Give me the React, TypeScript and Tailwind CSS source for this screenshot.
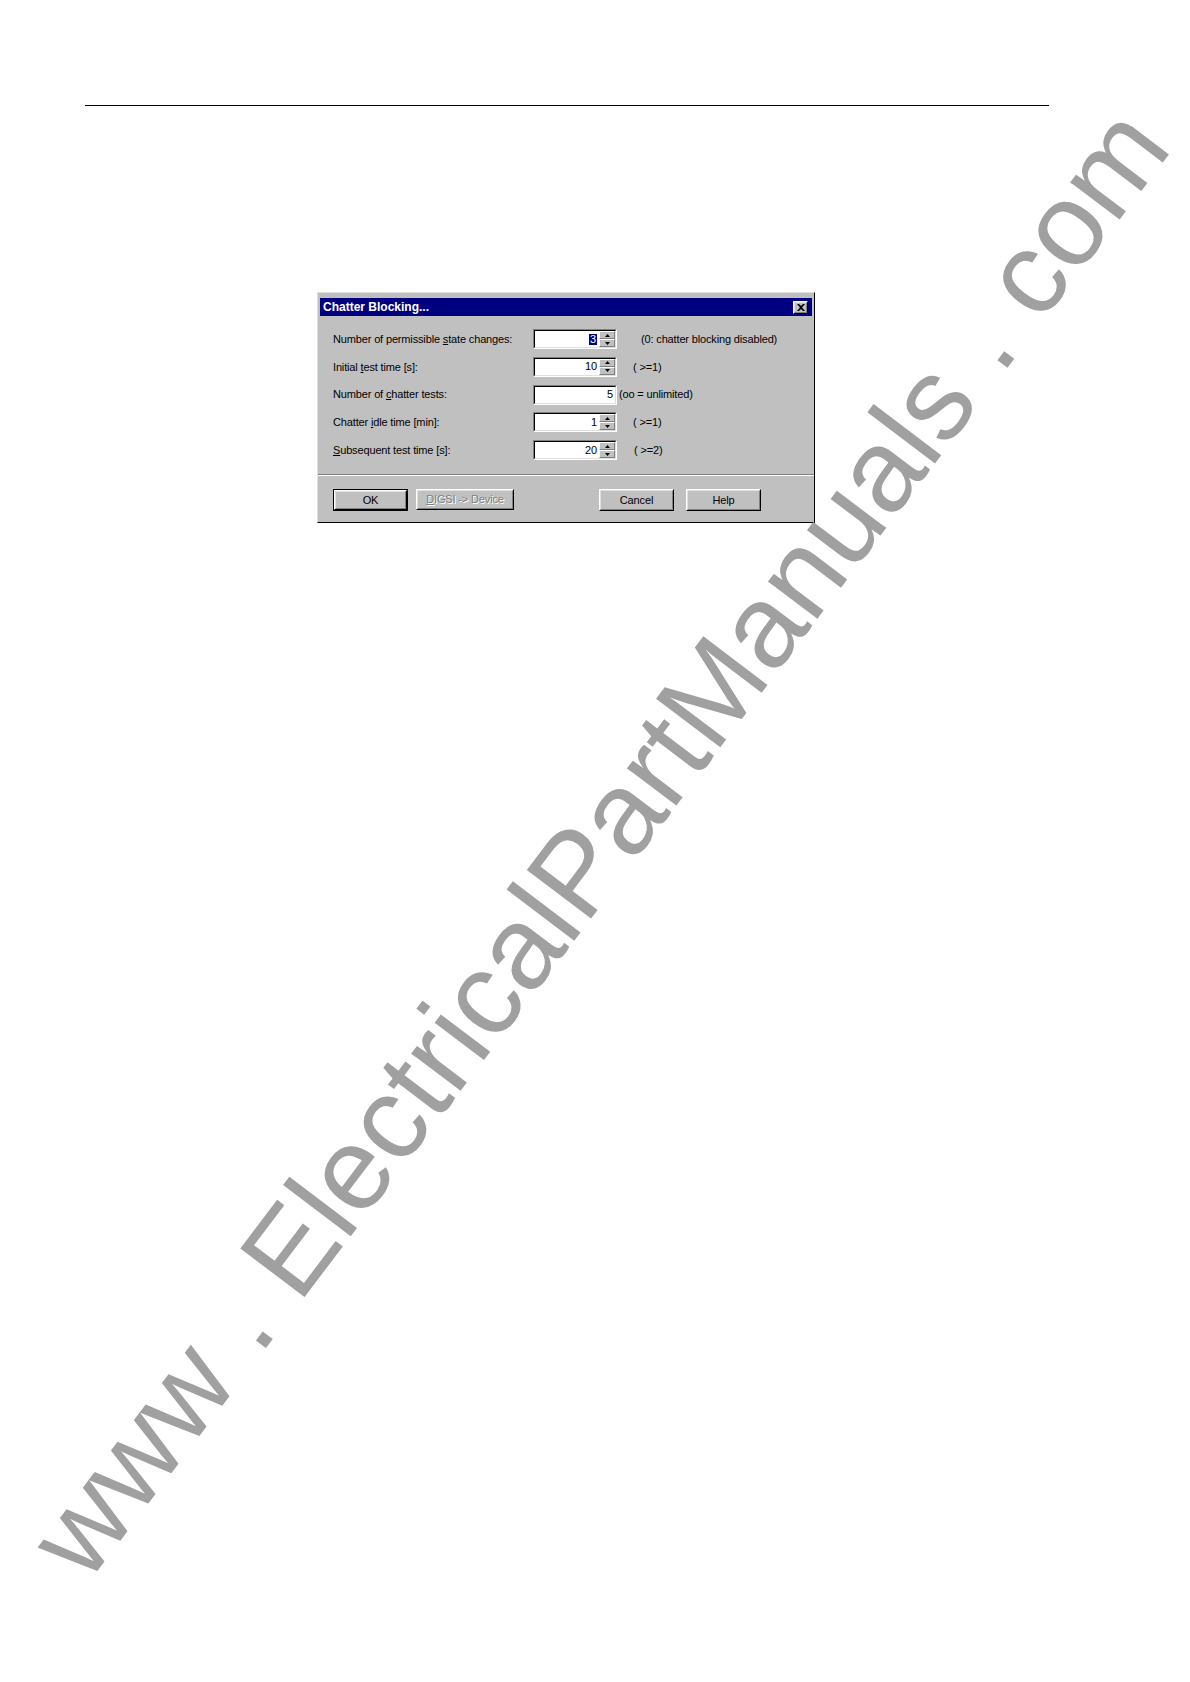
import React from 'react';

// Win95-style dialog on a white manual page with a diagonal watermark
const FONT = "font-['Liberation_Sans',Arial,sans-serif]";

const Raised = ({ className = '', children }: { className?: string; children?: React.ReactNode }) => (
  <div className={`border border-t-white border-l-white border-r-black border-b-black ${className}`}>
    <div className="flex h-full w-full items-center justify-center border border-t-[#dfdfdf] border-l-[#dfdfdf] border-r-[#808080] border-b-[#808080] bg-[#c0c0c0]">
      {children}
    </div>
  </div>
);

const Arrow = ({ up }: { up?: boolean }) => (
  <svg width="5" height="3" viewBox="0 0 5 3" className="block">
    <polygon points={up ? '2.5,0 5,3 0,3' : '0,0 5,0 2.5,3'} fill="#000" />
  </svg>
);

const SpinHalf = ({ up }: { up?: boolean }) => (
  <div className="flex h-[8px] w-full items-center justify-center border border-t-white border-l-white border-r-[#808080] border-b-[#808080] bg-[#c0c0c0]">
    <Arrow up={up} />
  </div>
);

interface FieldProps {
  value: React.ReactNode;
  spin?: boolean;
}

const Field = ({ value, spin = true }: FieldProps) => (
  <div className="h-[20px] w-[84px] border border-t-[#808080] border-l-[#808080] border-r-white border-b-white">
    <div className="flex h-full w-full border border-t-black border-l-black border-r-[#dfdfdf] border-b-[#dfdfdf]">
      <div className="flex flex-1 items-center justify-end bg-white pr-[2px] leading-none">{value}</div>
      {spin && (
        <div className="flex w-[16px] flex-col">
          <SpinHalf up />
          <SpinHalf />
        </div>
      )}
    </div>
  </div>
);

const ROWS: { label: React.ReactNode; value: React.ReactNode; spin?: boolean; hint: string; hintMl: string }[] = [
  {
    label: <>Number of permissible <u>s</u>tate changes:</>,
    value: <span className="bg-[#000080] px-px text-white">3</span>,
    hint: '(0: chatter blocking disabled)',
    hintMl: 'ml-[24px]',
  },
  { label: <>Initial <u>t</u>est time [s]:</>, value: '10', hint: '( >=1)', hintMl: 'ml-[16px]' },
  { label: <>Number of <u>c</u>hatter tests:</>, value: '5', spin: false, hint: '(oo = unlimited)', hintMl: 'ml-[2px]' },
  { label: <>Chatter <u>i</u>dle time [min]:</>, value: '1', hint: '( >=1)', hintMl: 'ml-[16px]' },
  { label: <><u>S</u>ubsequent test time [s]:</>, value: '20', hint: '( >=2)', hintMl: 'ml-[17px]' },
];

const ChatterDialog = () => (
  <div className={`ml-[317px] mt-[186px] w-[498px] border border-t-[#dfdfdf] border-l-[#dfdfdf] border-r-black border-b-black bg-[#c0c0c0] text-[11px] tracking-[-0.15px] text-black ${FONT}`}>
    {/* title bar */}
    <div className="mx-[2px] mt-[5px] flex h-[18px] items-center justify-between bg-[#000080] pl-[3px] pr-[4px]">
      <span className="text-[12px] font-bold tracking-normal text-white">Chatter Blocking...</span>
      <Raised className="h-[13px] w-[15px]">
        <svg width="8" height="7" viewBox="0 0 8 7">
          <path d="M0 0 L2 0 L4 2 L6 0 L8 0 L5 3.5 L8 7 L6 7 L4 5 L2 7 L0 7 L3 3.5 Z" fill="#000" />
        </svg>
      </Raised>
    </div>

    {/* settings */}
    <div className="flex flex-col gap-y-[7.75px] pl-[15px] pt-[13px]">
      {ROWS.map((r, i) => (
        <div key={i} className="flex h-[20px] items-center">
          <div className="w-[200px]">{r.label}</div>
          <Field value={r.value} spin={r.spin} />
          <div className={r.hintMl}>{r.hint}</div>
        </div>
      ))}
    </div>

    {/* etched separator */}
    <div className="mt-[14px] h-px bg-[#808080]" />
    <div className="h-px bg-white" />

    {/* buttons */}
    <div className="mt-[13px] flex pb-[11px] pl-[15px]">
      <div className="h-[22px] w-[75px] border border-black">
        <Raised className="h-full w-full">OK</Raised>
      </div>
      <Raised className="ml-[8px] h-[21px] w-[98px]">
        <span className="text-[#808080] [text-shadow:1px_1px_0_#fff]">
          <u>D</u>IGSI -&gt; Device
        </span>
      </Raised>
      <Raised className="ml-[85px] h-[22px] w-[75px]">Cancel</Raised>
      <Raised className="ml-[12px] h-[22px] w-[75px]">Help</Raised>
    </div>
  </div>
);

export default function App() {
  return (
    <div className="relative h-[1682px] w-[1190px] overflow-hidden bg-white">
      <div className="pl-[85px] pt-[105px]">
        <div className="h-px w-[964px] bg-black" />
      </div>

      <ChatterDialog />

      {/* watermark */}
      <div
        className={`pointer-events-none absolute left-[598px] top-[842px] -translate-x-1/2 -translate-y-1/2 rotate-[-52.9deg] whitespace-nowrap text-[117px] leading-none text-[#a0a0a0] ${FONT}`}
      >
        www . ElectricalPartManuals . com
      </div>
    </div>
  );
}
